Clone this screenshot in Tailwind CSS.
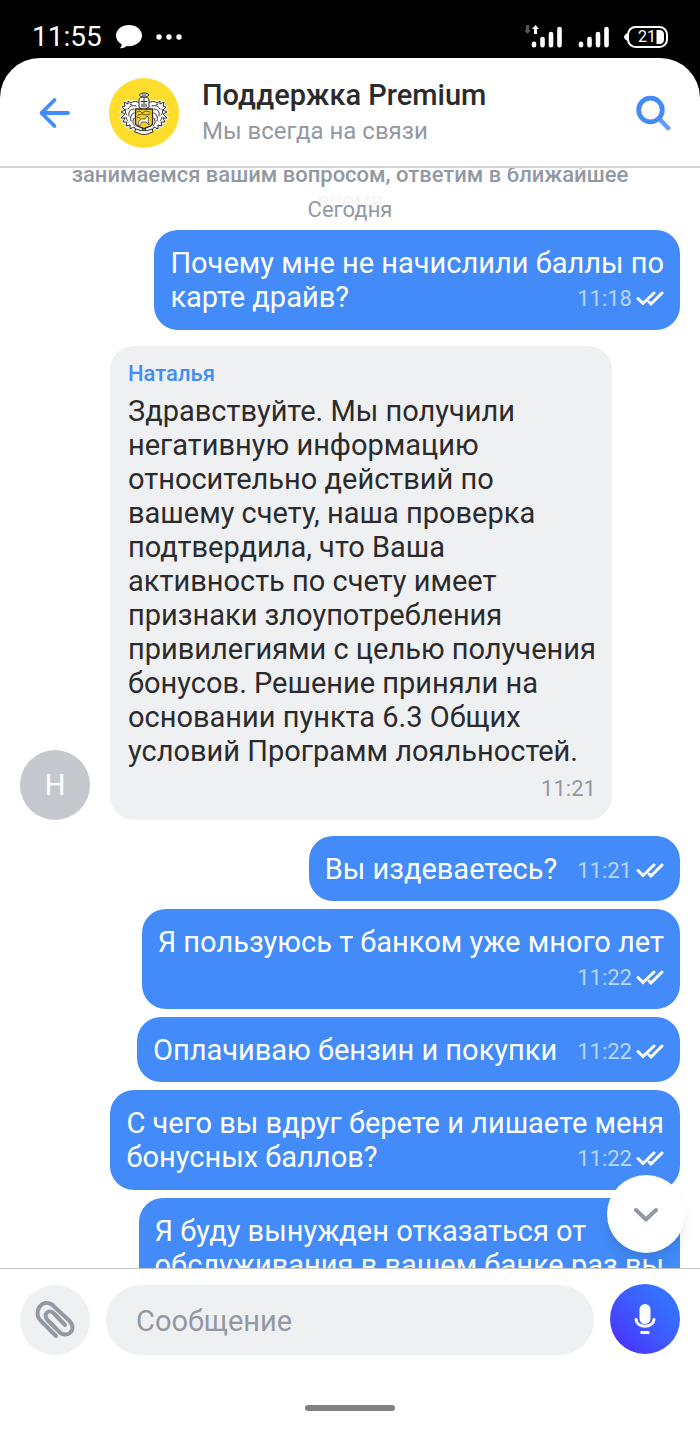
<!DOCTYPE html>
<html lang="ru">
<head>
  <meta charset="UTF-8" />
  <meta name="viewport" content="width=device-width, initial-scale=1" />
  <title>Поддержка Premium</title>
  <script src="https://cdn.jsdelivr.net/npm/@tailwindcss/browser@4"></script>
</head>
<body class="bg-black font-[Roboto,sans-serif]">
<div class="flex h-screen flex-col overflow-hidden">

  <!-- Status bar -->
  <div class="flex h-[58px] shrink-0 items-end justify-between px-8 pb-1 text-white">
    <div class="flex h-[34px] items-center gap-[14px]">
      <span class="text-[28px] leading-8">11:55</span>
      <svg class="h-6 w-[26px]" viewBox="0 0 26 24" fill="currentColor"><path d="M13 0C5.800 0 0 4.700 0 10.600c0 3.700 2 6.600 5.600 8.700.2 1.600-.4 2.800-1.800 3.900 2.700.2 4.900-.4 6.700-2.200l2.500.2c7.200 0 13-4.700 13-10.600S20.200 0 13 0z"/></svg>
      <svg class="h-6 w-[26px]" viewBox="0 0 26 24" fill="currentColor"><circle cx="3" cy="12" r="2.700"/><circle cx="13" cy="12" r="2.700"/><circle cx="23" cy="12" r="2.700"/></svg>
    </div>
    <div class="flex h-[34px] items-center">
      <svg class="h-6 w-[38px]" viewBox="0 0 38 24" fill="none" stroke="currentColor" stroke-linecap="round">
        <path fill="#555" stroke="none" d="M2 0h3v5h2L3.500 9 0 5h2z"/>
        <path fill="#fff" stroke="none" d="M10 9h3V4h2l-3.500-4L8 4h2z"/>
        <path stroke-width="4.600" d="M10 18.800v1.500M18.500 14v6.300M27 9v11.300M35.500 4v16.300"/>
      </svg>
      <svg class="ml-4 h-6 w-8" viewBox="0 0 32 24" fill="none" stroke="currentColor" stroke-linecap="round">
        <path stroke-width="4.600" d="M3 18.800v1.500M11.500 14v6.300M20 9v11.300M28.500 4v16.300"/>
      </svg>
      <div class="relative ml-[14px] h-[22px] w-11">
        <svg class="h-[22px] w-11" viewBox="0 0 44 22" fill="none">
          <rect x="4" y="1" width="39" height="20" rx="7.500" stroke="#fff" stroke-width="2"/>
          <path d="M4 7C1.500 8 0 9.500 0 11s1.500 3 4 4z" fill="#fff"/>
          <path d="M32.500 4h3c3 0 4.500 2 4.500 4.500v5c0 2.500-1.500 4.500-4.500 4.500h-3z" fill="#fff"/>
        </svg>
        <span class="absolute left-[14px] top-0 text-base leading-[22px]">21</span>
      </div>
    </div>
  </div>

  <div class="flex min-h-0 flex-1 flex-col rounded-t-[40px] bg-white">

    <!-- Header -->
    <header class="flex h-[110px] shrink-0 items-center border-b-2 border-[#d4d4d6] pl-[38px] pr-7 pt-[2px]">
      <button class="text-[#428bf9]" aria-label="Назад">
        <svg class="h-8 w-8" viewBox="0 0 32 32" fill="none" stroke="currentColor" stroke-width="3.800" stroke-linecap="round" stroke-linejoin="round"><path d="M30 16H3.500M16.500 3L3.500 16l13 13"/></svg>
      </button>
      <svg class="ml-[39px] h-[70px] w-[70px] shrink-0" viewBox="0 0 70 70">
        <circle cx="35" cy="35" r="35" fill="#ffdd2d"/>
        <!-- mantling: left half, then mirrored -->
        <g id="leaf" stroke="#2b2b2b" stroke-width="1" stroke-linejoin="round" stroke-linecap="round" fill="#fff">
          <path d="M33 28c-2-4-7-6-11-3l-3-2 0 3-4-2 1 4-3 1 3 3-4 2 4 2-4 4 4 0-2 4 4 0-1 4 4-1 0 4 4-2c1 3 4 4 8 4z" stroke="#fff" stroke-width="3"/>
          <path d="M33 28c-2-4-7-6-11-3l-3-2 0 3-4-2 1 4-3 1 3 3-4 2 4 2-4 4 4 0-2 4 4 0-1 4 4-1 0 4 4-2c1 3 4 4 8 4z"/>
          <path fill="none" d="M27 28c-4-1-6 0-8 3M25 31c-4 0-6 3-5 7M25 35c-3 1-4 4-3 8M17 31c-1 2-1 4 1 6M17 39c0 2 1 3 2 4M25 40c-2 3-1 6 1 8M23 27l-2-1"/>
        </g>
        <use href="#leaf" transform="matrix(-1 0 0 1 70 0)"/>
        <g stroke="#2b2b2b" stroke-width="1" stroke-linejoin="round" stroke-linecap="round" fill="#fff">
          <path d="M27 51l3 1c3 1 7 1 10 0l3-1 1 3-3 1c-4 2-8 2-12 0l-3-1z"/>
          <path d="M30 29v-7c0-4 10-4 10 0v7l-5 3z"/>
          <ellipse cx="35" cy="17" rx="4.500" ry="2"/>
          <path fill="none" d="M33 17h4M35 20v9M32 23.500h6M33 26v3M37 26v3"/>
          <path fill="#f3cf2b" stroke-width="1.300" d="M26.500 31h17v14.500c0 4-6 2.500-8.500 5.500-2.500-3-8.500-1.500-8.500-5.500z"/>
          <path fill="#fff" stroke-width=".700" d="M29 47l1-4 2-2h4l2-3 2 2-1 3 1 4-3-3h-4l-2 3z"/>
          <path fill="none" stroke="#66561a" d="M28 34l3-1 2 2 4-2 4 1M29 37l4-1 4 1 4-1M28 39l3 1"/>
        </g>
      </svg>
      <div class="ml-[23px] flex-1">
        <h1 class="text-[29px] font-medium leading-9 text-[#2b2b2d]">Поддержка Premium</h1>
        <p class="text-[24px] leading-9 text-[#9299a2]">Мы всегда на связи</p>
      </div>
      <button class="text-[#428bf9]" aria-label="Поиск">
        <svg class="h-9 w-9" viewBox="0 0 36 36" fill="none" stroke="currentColor" stroke-width="4.800"><path d="M23 23.500l9 9.500" stroke-width="4.600" stroke="#629ffa" stroke-linecap="round"/><circle cx="14.500" cy="15" r="11.800"/></svg>
      </button>
    </header>

    <!-- Messages -->
    <main class="relative flex min-h-0 flex-1 flex-col overflow-hidden px-5 text-[29px] leading-[34px]">
      <p class="-mt-[6px] h-[26px] shrink-0 text-center text-[22px] font-medium leading-[26px] text-[#9299a2]">занимаемся вашим вопросом, ответим в ближайшее</p>
      <p class="h-[8px] shrink-0 text-center text-[22px] font-medium leading-[26px] text-[#f6f6f7]">время</p>
      <p class="relative h-[34px] shrink-0 text-center text-[22px] leading-[28px] text-[#9299a2]">Сегодня</p>

      <div class="flex shrink-0 flex-col items-end gap-2 text-white">
        <div class="mb-2 flex flex-col rounded-3xl bg-[#428bf9] p-4">
          <p>Почему мне не начислили баллы по<br>карте драйв?</p>
          <div class="-mt-[34px] flex h-[34px] items-center gap-1 self-end pt-1 text-[22px] text-[#b9d6fd]">
            11:18
            <svg class="h-4 w-7" viewBox="0 0 28 16" fill="none" stroke="#fff" stroke-width="3" stroke-linecap="round"><path d="M2 7.500l5 5L18 2M13 11l2 2L26 2"/></svg>
          </div>
        </div>

        <div class="mb-2 flex w-full items-end gap-5 text-[#2b2b2d]">
          <div class="flex h-[70px] w-[70px] shrink-0 items-center justify-center rounded-full bg-[#c5c9ce] text-[29px] text-white">Н</div>
          <div class="flex flex-col rounded-3xl bg-[#eff0f2] pb-[14px] pl-[18px] pr-4 pt-3">
            <p class="mb-1 text-[22px] font-medium leading-8 text-[#428bf9]">Наталья</p>
            <p>Здравствуйте. Мы получили<br>негативную информацию<br>относительно действий по<br>вашему счету, наша проверка<br>подтвердила, что Ваша<br>активность по счету имеет<br>признаки злоупотребления<br>привилегиями с целью получения<br>бонусов. Решение приняли на<br>основании пункта 6.3 Общих<br>условий Программ лояльностей.</p>
            <p class="self-end pt-1 text-[22px] text-[#9299a2]">11:21</p>
          </div>
        </div>

        <div class="flex h-[65px] gap-5 rounded-3xl bg-[#428bf9] px-4 pt-4">
          <p>Вы издеваетесь?</p>
          <div class="flex h-[34px] items-center gap-1 pt-1 text-[22px] text-[#b9d6fd]">
            11:21
            <svg class="h-4 w-7" viewBox="0 0 28 16" fill="none" stroke="#fff" stroke-width="3" stroke-linecap="round"><path d="M2 7.500l5 5L18 2M13 11l2 2L26 2"/></svg>
          </div>
        </div>

        <div class="flex flex-col rounded-3xl bg-[#428bf9] p-4">
          <p>Я пользуюсь т банком уже много лет</p>
          <div class="flex h-[34px] items-center gap-1 self-end pt-1 text-[22px] text-[#b9d6fd]">
            11:22
            <svg class="h-4 w-7" viewBox="0 0 28 16" fill="none" stroke="#fff" stroke-width="3" stroke-linecap="round"><path d="M2 7.500l5 5L18 2M13 11l2 2L26 2"/></svg>
          </div>
        </div>

        <div class="flex h-[65px] gap-5 rounded-3xl bg-[#428bf9] px-4 pt-4">
          <p>Оплачиваю бензин и покупки</p>
          <div class="flex h-[34px] items-center gap-1 pt-1 text-[22px] text-[#b9d6fd]">
            11:22
            <svg class="h-4 w-7" viewBox="0 0 28 16" fill="none" stroke="#fff" stroke-width="3" stroke-linecap="round"><path d="M2 7.500l5 5L18 2M13 11l2 2L26 2"/></svg>
          </div>
        </div>

        <div class="flex flex-col rounded-3xl bg-[#428bf9] p-4">
          <p>С чего вы вдруг берете и лишаете меня<br>бонусных баллов?</p>
          <div class="-mt-[34px] flex h-[34px] items-center gap-1 self-end pt-1 text-[22px] text-[#b9d6fd]">
            11:22
            <svg class="h-4 w-7" viewBox="0 0 28 16" fill="none" stroke="#fff" stroke-width="3" stroke-linecap="round"><path d="M2 7.500l5 5L18 2M13 11l2 2L26 2"/></svg>
          </div>
        </div>

        <div class="rounded-3xl bg-[#428bf9] p-4">
          <p>Я буду вынужден отказаться от<br>обслуживания в вашем банке раз вы</p>
        </div>
      </div>

      <button class="absolute bottom-[15px] right-[15px] flex h-[78px] w-[78px] items-center justify-center rounded-full bg-white text-[#9299a2] shadow-lg" aria-label="Вниз">
        <svg class="h-4 w-6" viewBox="0 0 24 16" fill="none" stroke="currentColor" stroke-width="4" stroke-linecap="round" stroke-linejoin="round"><path d="M2 4l10 9.500L22 4"/></svg>
      </button>
    </main>

    <!-- Message input -->
    <footer class="shrink-0 border-t border-[#c4c4c6] px-5 pt-4">
      <div class="flex items-center gap-4">
        <button class="flex h-[70px] w-[70px] shrink-0 items-center justify-center rounded-full bg-[#eff0f2] text-[#9299a2]" aria-label="Прикрепить файл">
          <svg class="h-10 w-10" viewBox="0 0 40 40" fill="none" stroke="currentColor" stroke-width="4" stroke-linecap="round"><path d="M21 36L5.500 20.500C-2.500 12 7-2.500 17.500 5L34 20.500C43.500 30 31.500 38.500 25 32.500L12.500 20C7.500 14.500 13.500 8.500 18.500 13L30 25"/></svg>
        </button>
        <input type="text" aria-label="Сообщение" placeholder="Сообщение" class="h-[70px] min-w-0 flex-1 rounded-full bg-[#eff0f2] px-[30px] pt-[2px] text-[29px] text-[#2b2b2d] outline-none placeholder:text-[#9299a2]" />
        <button class="-mt-[3px] flex h-[70px] w-[70px] shrink-0 items-center justify-center rounded-full bg-linear-to-tr from-[#4a1dff] to-[#2b80ff] text-white" aria-label="Голосовое сообщение">
          <svg class="h-8 w-6" viewBox="0 0 24 32" fill="none" stroke="currentColor"><rect x="6.500" y="1" width="11" height="20" rx="5.500" fill="currentColor" stroke="none"/><path d="M3 16.500c1 9 17 9 18 0" stroke-width="3" stroke-linecap="round"/><path d="M7.500 29.500h9" stroke-width="3"/></svg>
        </button>
      </div>
      <div class="mx-auto mb-7 mt-[50px] h-[6px] w-[90px] rounded-full bg-[#7f7f7f]"></div>
    </footer>

  </div>
</div>
</body>
</html>
